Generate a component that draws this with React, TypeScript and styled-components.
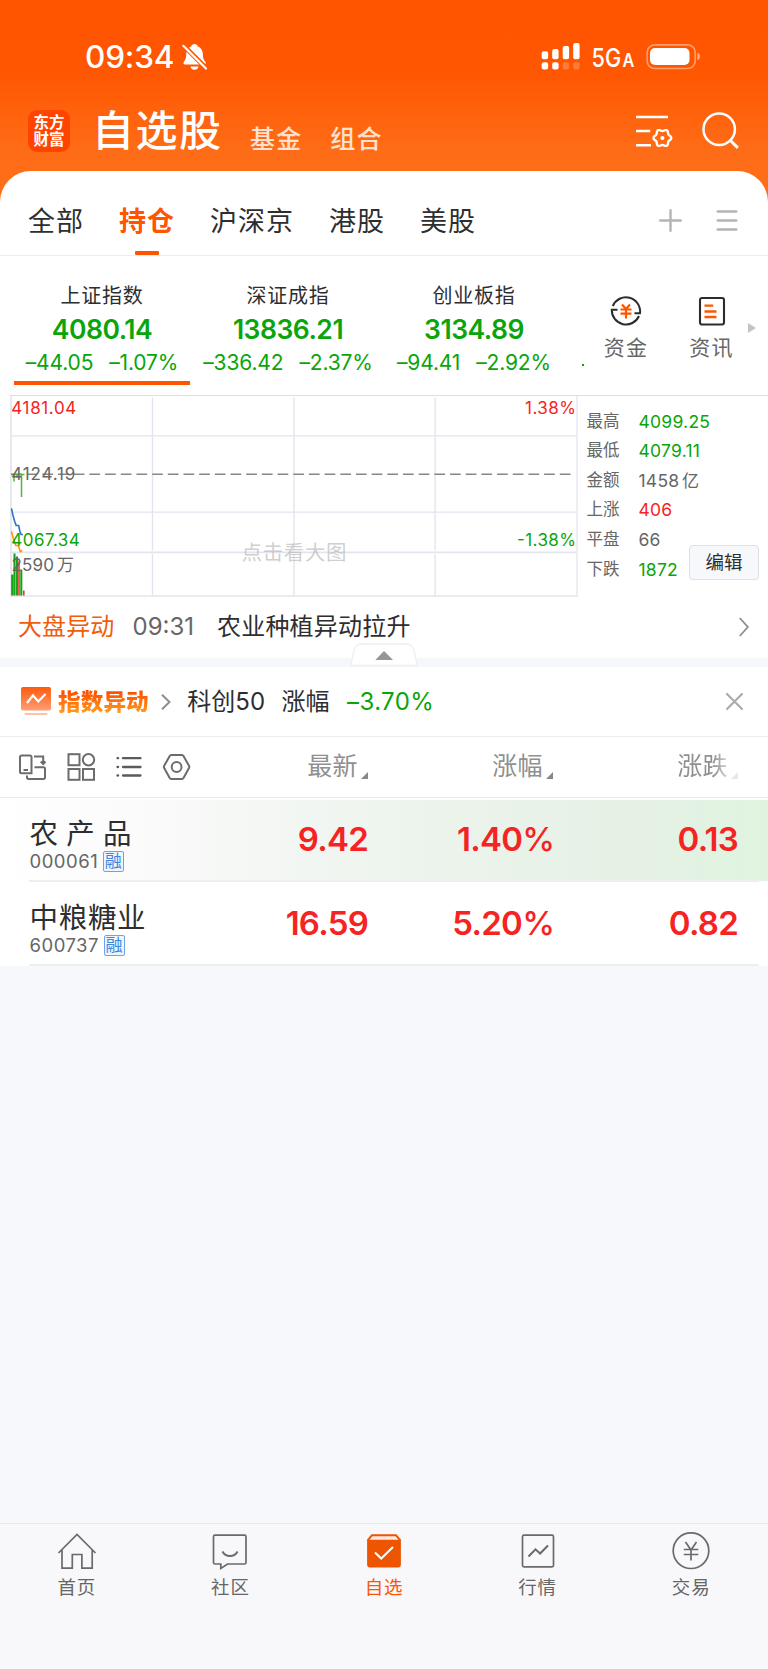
import React from 'react';
import styled, { createGlobalStyle } from 'styled-components';

const RED = '#f62323';
const GREEN = '#0aa50a';
const ORANGE = '#ff5500';
const INK = '#2e2e30';
const GREY = '#666666';

const GlobalStyle = createGlobalStyle`
  * { box-sizing: border-box; }
  body { margin: 0; background: #f7f8fb; }
  svg { display: block; flex: none; overflow: visible; }
`;

const Page = styled.div`
  width: 768px;
  height: 1669px;
  display: flex;
  flex-direction: column;
  overflow: hidden;
  background: #f7f8fb;
  font-family: Inter, 'Noto Sans CJK SC', sans-serif;
  color: ${INK};
  white-space: nowrap;
`;

const Top = styled.div`
  background: linear-gradient(#ff5500 0, #ff5601 70px, #ff6c17 150px, #ff6e19 200px);
`;

const StatusBar = styled.div`
  height: 92px;
  padding: 22px 67px 0 85px;
  display: flex;
  align-items: center;
  justify-content: space-between;
  color: #fff;
`;

const Clock = styled.div`
  display: flex;
  align-items: center;
  gap: 7.5px;
  font-size: 31.5px;
  line-height: 70px;
  font-weight: 500;
  letter-spacing: -0.2px;
`;

const TitleBar = styled.header`
  height: 79px;
  padding: 0 30px 0 28px;
  display: flex;
  align-items: flex-start;
  color: #fff;
`;

const Logo = styled.div`
  width: 42px;
  height: 42px;
  margin-top: 18px;
  padding-top: 4px;
  border-radius: 9px;
  background: #ff4400;
  font-size: 15.5px;
  line-height: 17px;
  font-weight: 700;
  text-align: center;
`;

const Title = styled.h1`
  margin: 18px 0 0 22px;
  font-size: 42px;
  line-height: 42px;
  font-weight: 500;
  letter-spacing: 1.5px;
`;

const TitleLink = styled.span`
  margin: 34px 0 0 27.5px;
  font-size: 25px;
  line-height: 26px;
  font-weight: 500;
  letter-spacing: 1.3px;
  color: #ffe1d0;
`;

const TitleActions = styled.div`
  display: flex;
  gap: 28px;
  margin: 19px 0 0 auto;
`;

const Panel = styled.main`
  background: #fff;
  border-radius: 31px 31px 0 0;
`;

const Tabs = styled.nav`
  height: 85px;
  padding: 0 30px 0 28px;
  display: flex;
  align-items: stretch;
  gap: 35px;
  border-bottom: 1px solid #ececec;
`;

const Tab = styled.span<{ $active?: boolean }>`
  display: flex;
  flex-direction: column;
  align-items: center;
  justify-content: space-between;
  padding-top: 30px;
  font-size: 27px;
  line-height: 41px;
  letter-spacing: 1px;
  font-weight: ${(p) => (p.$active ? 700 : 400)};
  color: ${(p) => (p.$active ? ORANGE : INK)};
  &::after {
    content: '';
    width: 24px;
    height: 4px;
    border-radius: 1px;
    background: ${(p) => (p.$active ? ORANGE : 'transparent')};
  }
`;

const TabActions = styled.div`
  display: flex;
  gap: 34px;
  margin-left: auto;
  padding-top: 38px;
`;

const Indices = styled.section`
  height: 139px;
  padding: 22px 0 0 14px;
  display: flex;
  align-items: flex-start;
  gap: 10px;
`;

const IndexCard = styled.div<{ $active?: boolean }>`
  flex: none;
  width: 176px;
  height: 107px;
  display: flex;
  flex-direction: column;
  align-items: center;
  border-bottom: 4px solid ${(p) => (p.$active ? ORANGE : 'transparent')};
  color: ${GREEN};
`;

const IndexName = styled.div`
  font-size: 20px;
  line-height: 36px;
  letter-spacing: 0.8px;
  color: ${INK};
`;

const IndexValue = styled.div`
  font-size: 26.5px;
  line-height: 31px;
  font-weight: 600;
  letter-spacing: -0.5px;
`;

const IndexChange = styled.div`
  display: flex;
  gap: 16px;
  font-size: 21px;
  line-height: 35px;
  letter-spacing: -0.15px;
`;

const NextCardEdge = styled.i`
  flex: none;
  width: 1.5px;
  height: 1.5px;
  margin: 86px 0 0 10px;
  background: ${GREEN};
`;

const Shortcut = styled.div<{ $left: number }>`
  margin-left: ${(p) => p.$left}px;
  padding-top: 17px;
  width: 46px;
  flex: none;
  display: flex;
  flex-direction: column;
  align-items: center;
  font-size: 21px;
  line-height: 30px;
  letter-spacing: 1.2px;
  color: ${GREY};
  svg { margin-bottom: 6px; }
`;

const MoreArrow = styled.i`
  margin: 44.5px 0 0 3px;
  border-left: 8px solid #c4c4c8;
  border-top: 5.5px solid transparent;
  border-bottom: 5.5px solid transparent;
`;

const Quote = styled.section`
  height: 202px;
  margin-left: 9.5px;
  display: flex;
  border-top: 1.5px solid #dcdde6;
`;

const Stats = styled.div`
  position: relative;
  flex: 1;
  padding: 10.5px 0 0 9px;
`;

const StatRow = styled.div`
  display: flex;
  height: 29.65px;
  font-size: 17.5px;
  line-height: 29px;
`;

const StatLabel = styled.span`
  width: 52px;
  font-size: 16.5px;
  color: ${GREY};
`;

const StatValue = styled.span<{ $color: string }>`
  color: ${(p) => p.$color};
  letter-spacing: 0.25px;
`;

const Unit = styled.span`
  margin-left: 2.5px;
  font-size: 17px;
`;

const EditButton = styled.button`
  position: absolute;
  right: 9px;
  top: 148.5px;
  width: 70px;
  height: 35px;
  padding: 0;
  border: 1px solid #dfe1e8;
  border-radius: 4px;
  background: #f7f8fb;
  font: 400 18.5px/32px Inter, 'Noto Sans CJK SC', sans-serif;
  color: ${INK};
`;

const News = styled.section`
  position: relative;
  height: 61px;
  padding: 0 19px 2px 18px;
  display: flex;
  align-items: center;
  font-size: 24px;
  line-height: 34px;
`;

const NewsTag = styled.span`
  width: 114.5px;
  letter-spacing: 0.1px;
  color: #f25c0a;
`;

const NewsTime = styled.span`
  width: 84.5px;
  color: ${GREY};
`;

const NewsText = styled.span`
  flex: 1;
  letter-spacing: 0.2px;
`;

const Handle = styled.div`
  position: absolute;
  left: 350px;
  top: 46px;
`;

const Divider = styled.div`
  height: 8.5px;
  background: #f6f7fa;
`;

const Alert = styled.section`
  height: 70px;
  padding: 1px 25px 0 21px;
  display: flex;
  align-items: center;
  border-bottom: 1px solid #ececec;
  font-size: 24px;
  line-height: 34px;
`;

const AlertTitle = styled.span`
  margin: 1px 12px 0 7px;
  font-size: 22.5px;
  line-height: 30px;
  font-weight: 900;
  letter-spacing: 0.2px;
  background: linear-gradient(#ff5200 20%, #ffa01e 90%);
  background-clip: text;
  -webkit-background-clip: text;
  color: transparent;
`;

const AlertText = styled.span<{ $gap: number; $color?: string; $spacing?: number }>`
  margin-left: ${(p) => p.$gap}px;
  letter-spacing: ${(p) => p.$spacing ?? 0}px;
  color: ${(p) => p.$color ?? INK};
`;

const CloseIcon = styled.svg`
  margin-left: auto;
`;

const Columns = styled.div`
  display: grid;
  grid-template-columns: 183px 185px 185px 185px;
`;

const TableHead = styled(Columns)`
  height: 61px;
  align-items: center;
  border-bottom: 1px solid #e9e9ec;
`;

const Tools = styled.div`
  display: flex;
  align-items: center;
  padding-left: 19px;
  gap: 21px;
`;

const HeadCell = styled.div<{ $fade?: boolean }>`
  display: flex;
  justify-content: flex-end;
  align-items: center;
  gap: 3px;
  font-size: 25px;
  line-height: 37px;
  letter-spacing: 0.4px;
  color: #909090;
  ${(p) => p.$fade && 'mask-image: linear-gradient(90deg, #000 160px, rgba(0,0,0,.2) 180px);'}
  &::after {
    content: '';
    margin-top: 17px;
    border-left: 7px solid transparent;
    border-bottom: 7px solid #88888c;
  }
`;

const Stock = styled(Columns)<{ $flash?: boolean }>`
  height: 84px;
  padding-top: 2px;
  background: ${(p) =>
    p.$flash
      ? 'linear-gradient(90deg, #ffffff 0, #f8f9f8 190px, #eef4ee 384px, #e5f1e5 640px, #dff4df 768px) 0 2px / 100% 81px no-repeat, #fff'
      : '#fff'};
`;

const StockLine = styled.div`
  grid-column: 1 / -1;
  width: 730px;
  margin-left: 29px;
  height: 1.5px;
  background: #eeeef0;
`;

const StockId = styled.div`
  padding: 15px 0 0 29.5px;
  height: 80.5px;
`;

const StockName = styled.div<{ $spread?: boolean }>`
  font-size: 28.5px;
  line-height: 38px;
  letter-spacing: ${(p) => (p.$spread ? 8.3 : 0.7)}px;
`;

const StockCode = styled.div`
  display: flex;
  align-items: center;
  gap: 4.5px;
  height: 19px;
  margin-top: -1px;
  font-size: 18.5px;
  line-height: 19px;
  letter-spacing: 0.5px;
  color: ${GREY};
`;

const Badge = styled.span`
  width: 21px;
  height: 21px;
  flex: none;
  border: 1px solid #6aa5ea;
  border-radius: 2px;
  background: #eef5fd;
  font-size: 17px;
  line-height: 18px;
  letter-spacing: 0;
  text-align: center;
  color: #3b87df;
`;

const Price = styled.div`
  height: 80.5px;
  text-align: right;
  font-size: 33px;
  line-height: 79px;
  font-weight: 600;
  letter-spacing: -0.75px;
  color: ${RED};
`;

const Percent = styled.span`
  margin-right: -1.2px;
  font-weight: 500;
`;

const Empty = styled.div`
  flex: 1;
`;

const NavBar = styled.nav`
  height: 146px;
  padding-top: 5.5px;
  display: flex;
  border-top: 1.5px solid #e8eaef;
  background: #f8f8fb;
`;

const NavItem = styled.div<{ $active?: boolean }>`
  flex: 1;
  display: flex;
  flex-direction: column;
  align-items: center;
  gap: 2.5px;
  font-size: 18.5px;
  line-height: 30px;
  letter-spacing: 0.8px;
  color: ${(p) => (p.$active ? ORANGE : GREY)};
`;

const gearPath = (cx: number, cy: number, r: number, d: number) =>
  Array.from({ length: 72 }, (_, i) => {
    const t = (i / 72) * Math.PI * 2;
    const q = r + d * Math.cos(6 * t);
    return `${i ? 'L' : 'M'}${(cx + q * Math.cos(t)).toFixed(2)} ${(cy + q * Math.sin(t)).toFixed(2)}`;
  }).join('') + 'Z';

const BellOff = () => (
  <svg width="26" height="28" viewBox="0 0 26 28" fill="#fff">
    <path d="M12.5 1c1.7 0 3 .9 3.4 2.400 3 1 4.700 3.700 4.900 7.100.2 4.300.6 6 2.500 8.200.9 1.100.5 2.800-1.100 2.800H3c-1.600 0-2-1.700-1.100-2.800C3.900 16.400 4.100 14.700 4.300 10.500 4.500 7.100 6.200 4.400 9.100 3.400 9.500 1.900 10.800 1 12.500 1z" />
    <path d="M8.500 23.500h8c-.3 2-1.900 3.300-4 3.300s-3.700-1.300-4-3.300z" />
    <path d="M1.500 2.500L25 26" stroke="#ff5600" strokeWidth="4.600" />
    <path d="M1.300 2.800L24 25.500" stroke="#fff" strokeWidth="2.200" strokeLinecap="round" />
  </svg>
);

const StatusIcons = () => (
  <svg width="160" height="32" viewBox="541 41 160 32" fill="#fff">
    {[51.3, 49, 46, 43].map((y, i) => (
      <g key={y}>
        <rect x={541.7 + i * 10.5} y={y} width="6.400" height={59.2 - y} rx="2" />
        <rect x={541.7 + i * 10.5} y="62.300" width="6.400" height="7.200" rx="2" opacity={i > 1 ? 0.22 : 1} />
      </g>
    ))}
    <text transform="translate(591.500 67) scale(.85 1)" fontSize="25.500" fontWeight="500">5G</text>
    <text transform="translate(622.500 67) scale(.88 1)" fontSize="18.500" fontWeight="600">A</text>
    <rect x="647.200" y="44.900" width="48" height="23.600" rx="7.500" fill="none" stroke="#fff" strokeWidth="1.700" opacity=".42" />
    <rect x="650" y="48" width="39.500" height="17" rx="5" />
    <path d="M697.300 52.800c3.600 1.200 3.600 6.300 0 7.500z" opacity=".5" />
  </svg>
);

const ListGear = () => (
  <svg width="38" height="38" viewBox="635 111 38 38" fill="none" stroke="#fff" strokeWidth="2.600">
    <path d="M635 117h32M635 131h14.200M635 145.200h15" />
    <path d={gearPath(661.4, 138, 7.9, 1)} strokeWidth="2.300" />
    <circle cx="661.400" cy="138" r="2.100" fill="#fff" stroke="none" />
  </svg>
);

const Search = () => (
  <svg width="36" height="38" viewBox="701 111 36 38" fill="none" stroke="#fff" strokeWidth="2.500">
    <circle cx="718.200" cy="129.300" r="15.700" />
    <path d="M729.200 140.300l7.600 7.600" strokeWidth="2.900" />
  </svg>
);

const grid = '#e4e4ee';

const Chart = () => (
  <svg width="568" height="201" viewBox="9.500 396.500 568 201" fill="none">
    <path d="M10.500 396v201" stroke="#dcdde6" strokeWidth="1.300" />
    <path d="M10 436.400h566M10 512.700h566" stroke={grid} strokeWidth="1.300" />
    <path d="M10 552.800h566" stroke={grid} strokeWidth="1.800" />
    <path d="M10 596.500h567" stroke="#d6d7e0" strokeWidth="1.200" />
    <path d="M152 398v153M293.500 398v153M434.600 398v153M152 554.500v42M293.500 554.500v42M434.600 554.500v42" stroke={grid} strokeWidth="1.400" />
    <path d="M576.500 396v201" stroke={grid} strokeWidth="1.300" />
    <path d="M10.500 474.700h561" stroke="#8c8488" strokeWidth="1.500" strokeDasharray="10.700 4.980" />
    <path d="M13.500 475v7M16.500 475v3M21 475v22.500M11 475h13" stroke="#4fb53c" strokeWidth="1.500" />
    <path d="M11 509l1.500 7 1.700 6 1.500 4h2.500l1.200 6 1.200 3h1.800" stroke="#2f72c4" strokeWidth="1.600" />
    <path d="M11 532l1.800 7 2.500 7h2.500l2 6 2 -1" stroke="#ff9410" strokeWidth="1.600" />
    <path d="M11.700 575v21M14 554v42M16.500 557v39M20.800 570v26" stroke="#17a317" strokeWidth="2.100" />
    <path d="M18.500 562v34M23.300 591v5" stroke="#ef3333" strokeWidth="1.600" />
    <g fontSize="17">
      <text x="10.800" y="414.200" fill={RED} textLength="65">4181.04</text>
      <text x="10.800" y="480.300" fill={GREY} textLength="64">4124.19</text>
      <text x="10.800" y="546.600" fill={GREEN} textLength="68.500">4067.34</text>
      <text x="11" y="571.800" fill={GREY} textLength="42.500">2590</text>
      <text x="56.500" y="571.800" fill={GREY}>万</text>
      <text x="575.500" y="414.200" fill={RED} textAnchor="end" textLength="51">1.38%</text>
      <text x="575.500" y="546.600" fill={GREEN} textAnchor="end" textLength="59">-1.38%</text>
    </g>
    <text x="241" y="560.500" fontSize="20.500" fill="#b4b4b4" fillOpacity=".65" textLength="105">点击看大图</text>
  </svg>
);

const indices = [
  ['上证指数', '4080.14', '–44.05', '–1.07%'],
  ['深证成指', '13836.21', '–336.42', '–2.37%'],
  ['创业板指', '3134.89', '–94.41', '–2.92%'],
];

const stats: [string, string, string, string?][] = [
  ['最高', '4099.25', GREEN],
  ['最低', '4079.11', GREEN],
  ['金额', '1458', GREY, '亿'],
  ['上涨', '406', RED],
  ['平盘', '66', GREY],
  ['下跌', '1872', GREEN],
];

const stocks = [
  { name: '农产品', code: '000061', price: '9.42', pct: '1.40', diff: '0.13', flash: true },
  { name: '中粮糖业', code: '600737', price: '16.59', pct: '5.20', diff: '0.82', flash: false },
];

const navItems = [
  {
    label: '首页',
    icon: <path d="M1.500 23L20 4.500l18.500 18.500M5 20V38.200H15.300V24.500h9.600V38.200H35.200V20" />,
  },
  {
    label: '社区',
    icon: (
      <>
        <path d="M5.500 5.200h29a1.500 1.500 0 0 1 1.500 1.500v25.800a1.500 1.500 0 0 1-1.500 1.500H17.500l-6.700 4.500v-4.500H5A1.500 1.500 0 0 1 3.500 32.500V6.700A1.500 1.500 0 0 1 5 5.200z" />
        <path d="M12.500 21.500c3 6 12 6 15 0" strokeWidth="2" />
      </>
    ),
  },
  {
    label: '自选',
    active: true,
    icon: (
      <>
        <path d="M3.100 9.500L7.500 4.300H32.500L36.900 9.500V34.500a3 3 0 0 1-3 3H6.100a3 3 0 0 1-3-3z" fill="#ee5500" stroke="none" />
        <path d="M8.500 6.200H31.500L34.500 9.700H5.500z" fill="#fbe9e0" stroke="none" />
        <path d="M11 22.500l6.200 6L29 17" stroke="#fff" strokeWidth="2" />
      </>
    ),
  },
  {
    label: '行情',
    icon: (
      <>
        <rect x="4.500" y="5.200" width="31" height="31.600" rx="1.500" />
        <path d="M10.500 26.500l7-7.200 4.600 4.200L30 15.500" strokeWidth="2" />
      </>
    ),
  },
  {
    label: '交易',
    icon: (
      <>
        <circle cx="20" cy="20.700" r="17.800" />
        <path d="M14.500 12l5.500 8 5.500-8M20 20v10.500M12.800 19.500h14.500M12.800 24.500h14.500" />
      </>
    ),
  },
];

export default function App() {
  return (
    <Page>
      <GlobalStyle />
      <Top>
        <StatusBar>
          <Clock>
            09:34
            <BellOff />
          </Clock>
          <StatusIcons />
        </StatusBar>
        <TitleBar>
          <Logo>东方<br />财富</Logo>
          <Title>自选股</Title>
          <TitleLink>基金</TitleLink>
          <TitleLink>组合</TitleLink>
          <TitleActions>
            <ListGear />
            <Search />
          </TitleActions>
        </TitleBar>
        <Panel>
          <Tabs>
            <Tab>全部</Tab>
            <Tab $active>持仓</Tab>
            <Tab>沪深京</Tab>
            <Tab>港股</Tab>
            <Tab>美股</Tab>
            <TabActions>
              <svg width="23" height="23" viewBox="0 0 23 23" stroke="#b4b4b4" strokeWidth="2.400" strokeLinecap="round">
                <path d="M1.200 11.500h20.600M11.500 1.200v20.600" />
              </svg>
              <svg width="22" height="23" viewBox="0 0 22 23" stroke="#b4b4b4" strokeWidth="2.400" strokeLinecap="round">
                <path d="M1.700 2.500h18.600M1.700 11.500h18.600M1.700 20.500h18.600" />
              </svg>
            </TabActions>
          </Tabs>
          <Indices>
            {indices.map(([name, value, diff, pct], i) => (
              <IndexCard key={name} $active={i === 0}>
                <IndexName>{name}</IndexName>
                <IndexValue>{value}</IndexValue>
                <IndexChange>
                  <span>{diff}</span>
                  <span>{pct}</span>
                </IndexChange>
              </IndexCard>
            ))}
            <NextCardEdge />
            <Shortcut $left={9.5}>
              <svg width="32" height="32" viewBox="0 0 32 32" fill="none" stroke="#2c2c2e" strokeWidth="2">
                <path d="M2.800 11A14.200 14.200 0 0 1 30 18.200H24.500" />
                <path d="M29 21A14.200 14.200 0 0 1 1.800 14.800H7.500" />
                <path d="M12 9.500l4 4.500 4-4.500M16 14v9.500M10.500 14.500h11M10.500 18.700h11" stroke={ORANGE} strokeWidth="2.200" />
              </svg>
              资金
            </Shortcut>
            <Shortcut $left={29.5}>
              <svg width="32" height="32" viewBox="0 0 32 32" fill="none" stroke="#2c2c2e" strokeWidth="2.100">
                <rect x="4" y="3" width="24" height="26.500" rx="2" />
                <path d="M8.500 10.700h8.700M8.500 16.500h12M8.500 22h12" stroke={ORANGE} strokeWidth="2.300" />
              </svg>
              资讯
            </Shortcut>
            <MoreArrow />
          </Indices>
          <Quote>
            <Chart />
            <Stats>
              {stats.map(([label, value, color, unit]) => (
                <StatRow key={label}>
                  <StatLabel>{label}</StatLabel>
                  <StatValue $color={color}>
                    {value}
                    {unit && <Unit>{unit}</Unit>}
                  </StatValue>
                </StatRow>
              ))}
              <EditButton>编辑</EditButton>
            </Stats>
          </Quote>
          <News>
            <NewsTag>大盘异动</NewsTag>
            <NewsTime>09:31</NewsTime>
            <NewsText>农业种植异动拉升</NewsText>
            <svg width="10" height="20" viewBox="0 0 10 20" fill="none" stroke="#8e8e90" strokeWidth="1.800">
              <path d="M.8 1l8 9-8 9" />
            </svg>
            <Handle>
              <svg width="68" height="23" viewBox="0 0 68 23">
                <path d="M1 22.500L3.500 9C4.500 4 7 1 12 1H56c5 0 7.500 3 8.500 8L67 22.500z" fill="#fff" stroke="#eeeff3" strokeWidth="1.300" />
                <path d="M25.300 17L34 8l9 9z" fill="#969696" />
              </svg>
            </Handle>
          </News>
          <Divider />
          <Alert>
            <svg width="30" height="29" viewBox="0 0 30 29" fill="none">
              <defs>
                <linearGradient id="alertFill" x1="0" y1="0" x2="0" y2="1">
                  <stop offset="0" stopColor="#ff5a0c" />
                  <stop offset="1" stopColor="#ff9e74" />
                </linearGradient>
              </defs>
              <rect width="30" height="23.500" rx="2" fill="url(#alertFill)" />
              <path d="M6 16l6-7.500 5.300 6L24.500 7" stroke="#fff" strokeWidth="2.200" />
              <path d="M4.500 27h21" stroke="#ffc2a6" strokeWidth="2.200" strokeLinecap="round" />
            </svg>
            <AlertTitle>指数异动</AlertTitle>
            <svg width="10" height="16" viewBox="0 0 10 16" fill="none" stroke="#8e8e90" strokeWidth="2">
              <path d="M1 .8l7.500 7.200L1 15.200" />
            </svg>
            <AlertText $gap={16.5}>科创50</AlertText>
            <AlertText $gap={16.5}>涨幅</AlertText>
            <AlertText $gap={17.5} $color={GREEN} $spacing={0.4}>–3.70%</AlertText>
            <CloseIcon width="17" height="17" viewBox="0 0 17 17" stroke="#acacac" strokeWidth="2.200" strokeLinecap="round">
              <path d="M1 1l15 15M16 1L1 16" />
            </CloseIcon>
          </Alert>
          <TableHead>
            <Tools>
              <svg width="27" height="26" viewBox="0 0 27 26" fill="none" stroke="#6c6c6e" strokeWidth="2">
                <path d="M2.500 1.500h8.500a1.500 1.500 0 0 1 1.500 1.500v16.300H2.500A1.500 1.500 0 0 1 1 17.800V3A1.500 1.500 0 0 1 2.500 1.500zM4.500 16h4.500M15 2.500h9.200v7M21.700 7.500l2.500 2.500 2.300-2.500M15.500 13.200h9a1.500 1.500 0 0 1 1.500 1.500v8.800a1.500 1.500 0 0 1-1.500 1.500H9.500A1.500 1.500 0 0 1 8 23.500v-2" />
              </svg>
              <svg width="28" height="28" viewBox="0 0 28 28" fill="none" stroke="#6c6c6e" strokeWidth="2">
                <rect x="1.500" y="1.200" width="11" height="11" />
                <circle cx="21.500" cy="6.700" r="5.700" />
                <rect x="1.500" y="16" width="11" height="10.800" />
                <rect x="16" y="16" width="11" height="10.800" />
              </svg>
              <svg width="26" height="22" viewBox="0 0 26 22" fill="none" stroke="#5c5c5e" strokeWidth="2.300" strokeLinecap="round">
                <path d="M7 2.200h17.500M7 11h17.500M7 19.500h17.500M1.500 2.200h.6M1.500 11h.6M1.500 19.500h.6" />
              </svg>
              <svg width="27" height="26" viewBox="0 0 27 26" fill="none" stroke="#6c6c6e" strokeWidth="2">
                <path d="M8.300 1h10.600a2 2 0 0 1 1.600 1L26 11.800a2 2 0 0 1 0 2.200L20.500 24a2 2 0 0 1-1.600 1H8.300a2 2 0 0 1-1.600-1L1.200 14a2 2 0 0 1 0-2.200L6.700 2a2 2 0 0 1 1.600-1z" />
                <circle cx="13.600" cy="13" r="4.900" />
              </svg>
            </Tools>
            <HeadCell>最新</HeadCell>
            <HeadCell>涨幅</HeadCell>
            <HeadCell $fade>涨跌</HeadCell>
          </TableHead>
          {stocks.map((s) => (
            <Stock key={s.code} $flash={s.flash}>
              <StockId>
                <StockName $spread={s.flash}>{s.name}</StockName>
                <StockCode>
                  {s.code}
                  <Badge>融</Badge>
                </StockCode>
              </StockId>
              <Price>{s.price}</Price>
              <Price>{s.pct}<Percent>%</Percent></Price>
              <Price>{s.diff}</Price>
              <StockLine />
            </Stock>
          ))}
        </Panel>
      </Top>
      <Empty />
      <NavBar>
        {navItems.map((item) => (
          <NavItem key={item.label} $active={item.active}>
            <svg width="40" height="40" viewBox="0 0 40 40" fill="none" stroke="#6a6a6c" strokeWidth="1.700">
              {item.icon}
            </svg>
            {item.label}
          </NavItem>
        ))}
      </NavBar>
    </Page>
  );
}
